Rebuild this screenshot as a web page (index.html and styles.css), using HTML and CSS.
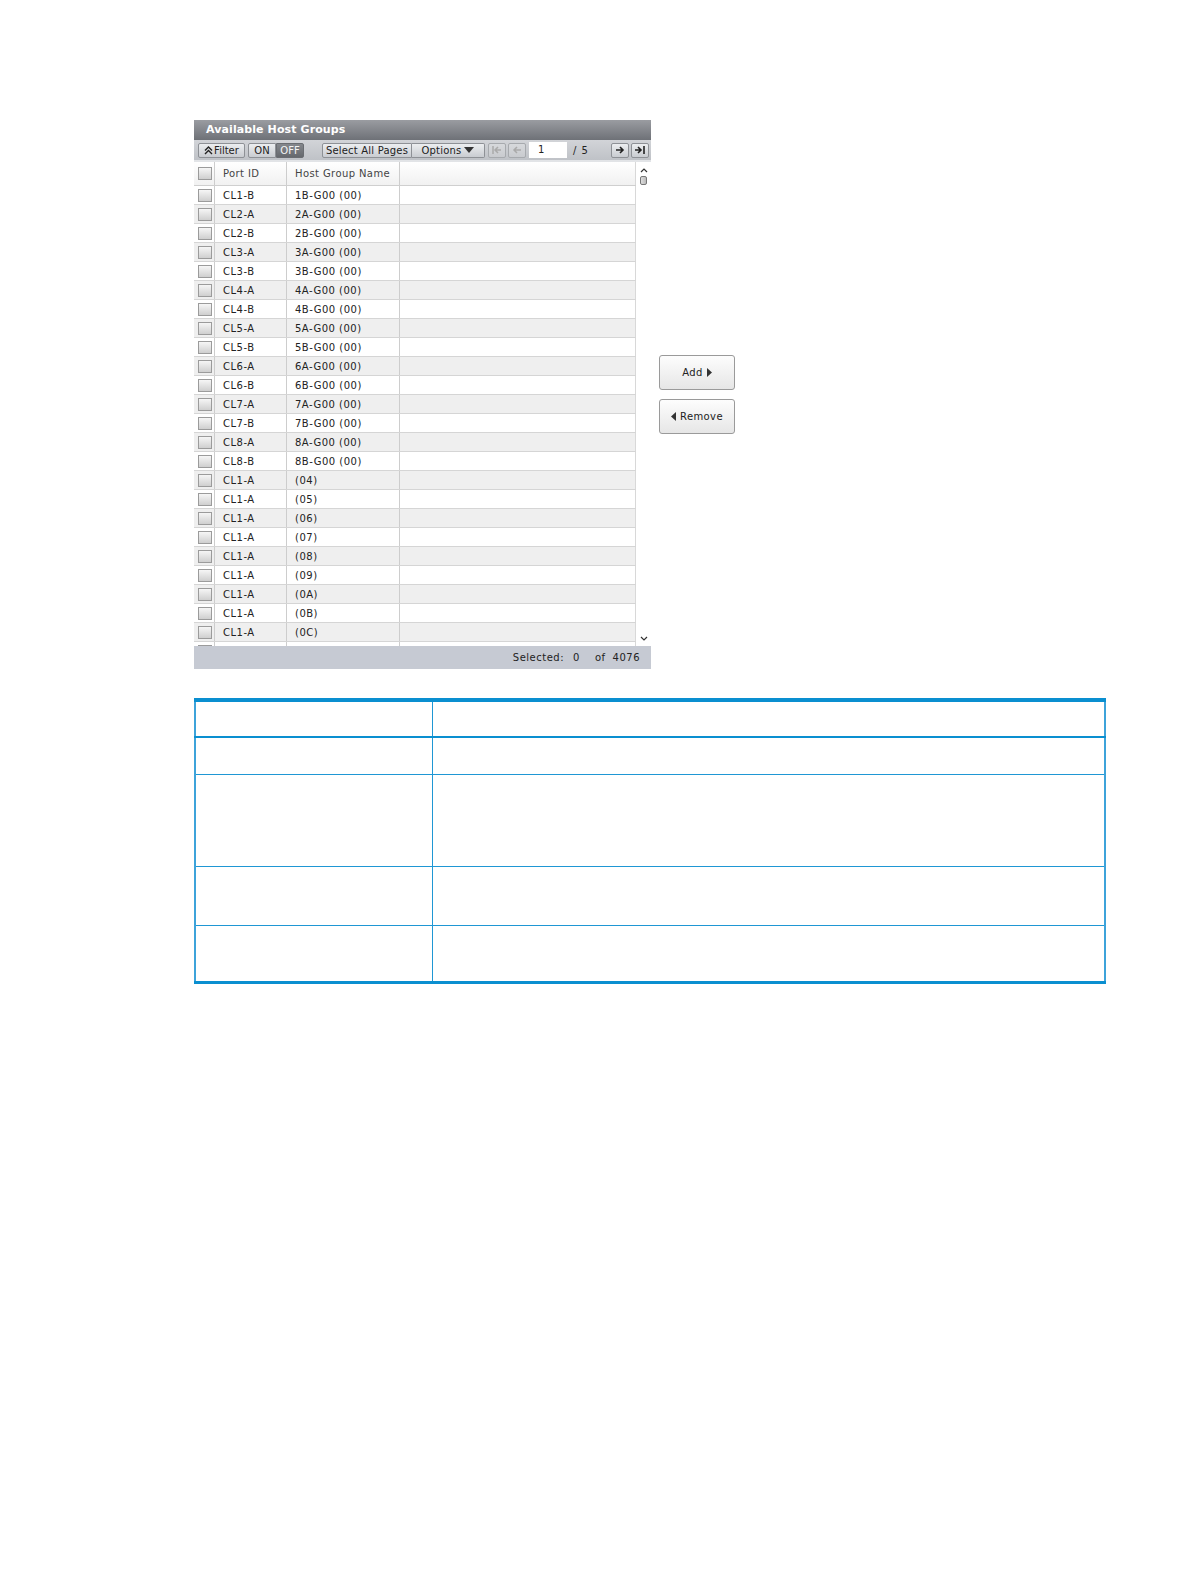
FILE: index.html
```html
<!DOCTYPE html>
<html>
<head>
<meta charset="utf-8">
<link rel="stylesheet" href="styles.css">
</head>
<body>
<div class="page">
  <div class="top">
    <div class="panel">
      <div class="title">Available Host Groups</div>
      <div class="toolbar">
        <span class="tb filter"><svg width="9" height="9" viewBox="0 0 9 9"><path d="M1 4.5 L4.5 1 L8 4.5 M1 8 L4.5 4.5 L8 8" fill="none" stroke="#222" stroke-width="1.4"/></svg>Filter</span>
        <span class="tb on">ON</span><span class="tb off">OFF</span>
        <span class="tb selall">Select All Pages</span><span class="tb options">Options<svg width="10" height="6" viewBox="0 0 10 6"><path d="M0 0 H10 L5 6 Z" fill="#333"/></svg></span>
        <span class="tb nav dis first"><svg width="12" height="10" viewBox="0 0 12 10"><path d="M2 1 V9 M10 5 H4 M7 2 L4 5 L7 8" fill="none" stroke="#aaa" stroke-width="1.5"/></svg></span>
        <span class="tb nav dis prev"><svg width="12" height="10" viewBox="0 0 12 10"><path d="M10 5 H3 M6 2 L3 5 L6 8" fill="none" stroke="#aaa" stroke-width="1.5"/></svg></span>
        <span class="pageinput">1</span>
        <span class="pagecount">/ 5</span>
        <span class="tb nav next"><svg width="12" height="10" viewBox="0 0 12 10"><path d="M2 5 H9 M6 2 L9 5 L6 8" fill="none" stroke="#222" stroke-width="1.6"/></svg></span>
        <span class="tb nav last"><svg width="12" height="10" viewBox="0 0 12 10"><path d="M1 5 H7 M4 2 L7 5 L4 8 M10 1 V9" fill="none" stroke="#222" stroke-width="1.6"/></svg></span>
      </div>
      <div class="gridwrap">
        <div class="grid">
          <div class="row head"><span class="cb"><i class="box"></i></span><span class="c1">Port ID</span><span class="c2">Host Group Name</span><span class="c3"></span></div>
          <div class="row"><span class="cb"><i class="box"></i></span><span class="c1">CL1-B</span><span class="c2">1B-G00 (00)</span><span class="c3"></span></div>
          <div class="row alt"><span class="cb"><i class="box"></i></span><span class="c1">CL2-A</span><span class="c2">2A-G00 (00)</span><span class="c3"></span></div>
          <div class="row"><span class="cb"><i class="box"></i></span><span class="c1">CL2-B</span><span class="c2">2B-G00 (00)</span><span class="c3"></span></div>
          <div class="row alt"><span class="cb"><i class="box"></i></span><span class="c1">CL3-A</span><span class="c2">3A-G00 (00)</span><span class="c3"></span></div>
          <div class="row"><span class="cb"><i class="box"></i></span><span class="c1">CL3-B</span><span class="c2">3B-G00 (00)</span><span class="c3"></span></div>
          <div class="row alt"><span class="cb"><i class="box"></i></span><span class="c1">CL4-A</span><span class="c2">4A-G00 (00)</span><span class="c3"></span></div>
          <div class="row"><span class="cb"><i class="box"></i></span><span class="c1">CL4-B</span><span class="c2">4B-G00 (00)</span><span class="c3"></span></div>
          <div class="row alt"><span class="cb"><i class="box"></i></span><span class="c1">CL5-A</span><span class="c2">5A-G00 (00)</span><span class="c3"></span></div>
          <div class="row"><span class="cb"><i class="box"></i></span><span class="c1">CL5-B</span><span class="c2">5B-G00 (00)</span><span class="c3"></span></div>
          <div class="row alt"><span class="cb"><i class="box"></i></span><span class="c1">CL6-A</span><span class="c2">6A-G00 (00)</span><span class="c3"></span></div>
          <div class="row"><span class="cb"><i class="box"></i></span><span class="c1">CL6-B</span><span class="c2">6B-G00 (00)</span><span class="c3"></span></div>
          <div class="row alt"><span class="cb"><i class="box"></i></span><span class="c1">CL7-A</span><span class="c2">7A-G00 (00)</span><span class="c3"></span></div>
          <div class="row"><span class="cb"><i class="box"></i></span><span class="c1">CL7-B</span><span class="c2">7B-G00 (00)</span><span class="c3"></span></div>
          <div class="row alt"><span class="cb"><i class="box"></i></span><span class="c1">CL8-A</span><span class="c2">8A-G00 (00)</span><span class="c3"></span></div>
          <div class="row"><span class="cb"><i class="box"></i></span><span class="c1">CL8-B</span><span class="c2">8B-G00 (00)</span><span class="c3"></span></div>
          <div class="row alt"><span class="cb"><i class="box"></i></span><span class="c1">CL1-A</span><span class="c2">(04)</span><span class="c3"></span></div>
          <div class="row"><span class="cb"><i class="box"></i></span><span class="c1">CL1-A</span><span class="c2">(05)</span><span class="c3"></span></div>
          <div class="row alt"><span class="cb"><i class="box"></i></span><span class="c1">CL1-A</span><span class="c2">(06)</span><span class="c3"></span></div>
          <div class="row"><span class="cb"><i class="box"></i></span><span class="c1">CL1-A</span><span class="c2">(07)</span><span class="c3"></span></div>
          <div class="row alt"><span class="cb"><i class="box"></i></span><span class="c1">CL1-A</span><span class="c2">(08)</span><span class="c3"></span></div>
          <div class="row"><span class="cb"><i class="box"></i></span><span class="c1">CL1-A</span><span class="c2">(09)</span><span class="c3"></span></div>
          <div class="row alt"><span class="cb"><i class="box"></i></span><span class="c1">CL1-A</span><span class="c2">(0A)</span><span class="c3"></span></div>
          <div class="row"><span class="cb"><i class="box"></i></span><span class="c1">CL1-A</span><span class="c2">(0B)</span><span class="c3"></span></div>
          <div class="row alt"><span class="cb"><i class="box"></i></span><span class="c1">CL1-A</span><span class="c2">(0C)</span><span class="c3"></span></div>
          <div class="row"><span class="cb"><i class="box"></i></span><span class="c1"></span><span class="c2"></span><span class="c3"></span></div>
        </div>
        <div class="scroll">
          <svg class="up" width="8" height="5" viewBox="0 0 8 5"><path d="M1 4 L4 1 L7 4" fill="none" stroke="#333" stroke-width="1.2"/></svg>
          <span class="thumb"></span>
          <span class="spacer"></span>
          <svg class="down" width="8" height="5" viewBox="0 0 8 5"><path d="M1 1 L4 4 L7 1" fill="none" stroke="#333" stroke-width="1.2"/></svg>
        </div>
      </div>
      <div class="footer"><span>Selected:</span><span class="n0">0</span><span class="of">of</span><span class="total">4076</span></div>
    </div>
    <div class="actions">
      <button class="btn add">Add <svg width="5" height="9" viewBox="0 0 5 9"><path d="M0 0 L5 4.5 L0 9 Z" fill="#333"/></svg></button>
      <button class="btn remove"><svg width="5" height="9" viewBox="0 0 5 9"><path d="M5 0 L0 4.5 L5 9 Z" fill="#333"/></svg> Remove</button>
    </div>
  </div>

  <table class="desc">
    <tr class="h"><td class="k"></td><td class="v"></td></tr>
    <tr class="r1"><td class="k"></td><td class="v"></td></tr>
    <tr class="r2"><td class="k"></td><td class="v"></td></tr>
    <tr class="r3"><td class="k"></td><td class="v"></td></tr>
    <tr class="r4"><td class="k"></td><td class="v"></td></tr>
  </table>
</div>
</body>
</html>
```
FILE: styles.css
```css
* { box-sizing: border-box; }
html, body { margin: 0; padding: 0; background: #fff; }
body { font-family: "DejaVu Sans", Verdana, sans-serif; }
.page { padding: 120px 0 0 194px; }

.top { display: flex; align-items: center; }
.panel { width: 457px; height: 549px; display: flex; flex-direction: column; background: #fff; }

.title {
  height: 20px; line-height: 20px; padding-left: 12px;
  font-size: 11px; font-weight: bold; color: #fff; letter-spacing: 0.1px;
  background: linear-gradient(#9a9ca1, #6e7177);
}

.toolbar {
  height: 20px; display: flex; align-items: center;
  background: linear-gradient(#d2d4d8, #bfc2c7);
  padding-left: 4px; font-size: 10px; color: #222;
}
.tb {
  height: 15px; display: inline-flex; align-items: center; justify-content: center;
  border: 1px solid #8e9196; border-radius: 2px;
  background: linear-gradient(#eceef0, #c9ccd1);
  padding: 0 3px; white-space: nowrap;
}
.filter { width: 47px; gap: 1px; }
.on { width: 28px; margin-left: 3px; border-radius: 2px 0 0 2px; }
.off { width: 28px; background: linear-gradient(#85888d, #65686d); color: #f4f4f4; border-color: #6a6d72; border-radius: 0 2px 2px 0; }
.selall { width: 90px; margin-left: 18px; border-radius: 2px 0 0 2px; letter-spacing: 0.2px; }
.options { width: 73px; gap: 3px; border-left: none; border-radius: 0 2px 2px 0; letter-spacing: 0.2px; }
.nav { width: 18px; padding: 0; }
.first { margin-left: 3px; }
.prev { margin-left: 2px; }
.dis { background: linear-gradient(#d7d9dc, #c9cbcf); border-color: #a7aaae; }
.pageinput {
  width: 38px; height: 16px; margin-left: 3px; background: #fff; line-height: 16px;
  padding-left: 9px; font-size: 10px;
}
.pagecount { margin-left: 6px; width: 38px; letter-spacing: 1px; }
.next { margin-left: 0; }
.last { margin-left: 2px; }

.gridwrap { flex: 1; display: flex; min-height: 0; border-top: 2px solid #e2e4e7; }
.grid { width: 442px; overflow: hidden; }
.row {
  display: grid; grid-template-columns: 21px 72px 113px 1fr;
  height: 19px; border-bottom: 1px solid #d5d5d5; background: #fff;
  font-size: 10px; color: #222; letter-spacing: 0.5px;
}
.row.alt { background: #efefef; }
.row.head { height: 24px; background: linear-gradient(#ffffff, #f1f1f1); color: #444; border-bottom: 1px solid #cfcfcf; letter-spacing: 0.4px; }
.row > span { display: flex; align-items: center; border-right: 1px solid #cdcdcd; }
.row > span.c3 { border-right: 1px solid #d8d8d8; }
.cb { justify-content: center; padding-left: 1px; }
.box {
  display: block; width: 14px; height: 13px;
  border: 1px solid #9b9b9b; background: linear-gradient(#f6f6f6, #cfcfcf);
}
.c1 { padding-left: 8px; }
.c2 { padding-left: 8px; }

.scroll { width: 15px; display: flex; flex-direction: column; align-items: center; background: #fff; }
.scroll .up { margin-top: 6px; }
.scroll .thumb { width: 7px; height: 9px; margin-top: 3px; border: 1px solid #777; border-radius: 2px; background: linear-gradient(90deg, #ddd, #bbb); }
.scroll .spacer { flex: 1; }
.scroll .down { margin-bottom: 5px; }

.footer {
  height: 23px; display: flex; align-items: center; justify-content: flex-end;
  padding-right: 11px; background: #c6cad3; font-size: 10px; color: #222; letter-spacing: 0.5px;
}
.footer .n0 { margin-left: 9px; }
.footer .of { margin-left: 15px; }
.footer .total { margin-left: 7px; }

.actions { display: flex; flex-direction: column; gap: 9px; margin-left: 8px; }
.btn {
  width: 76px; height: 35px; border: 1px solid #9a9a9a; border-radius: 3px;
  background: linear-gradient(#fdfdfd, #e6e6e6);
  font-family: "DejaVu Sans", Verdana, sans-serif; font-size: 10px; color: #222; letter-spacing: 0.4px;
  display: flex; align-items: center; justify-content: center; gap: 4px; padding: 0;
}

.desc {
  margin-top: 29px; width: 912px; border-collapse: collapse;
  border-top: 4px solid #0a8fd0; border-bottom: 3px solid #0a8fd0;
  border-left: 2px solid #3da3da; border-right: 2px solid #3da3da;
}
.desc td { border: 1px solid #1f97d4; padding: 0; }
.desc td.k { width: 237px; }
.desc tr.h td { height: 37px; border-bottom: 2px solid #0a8fd0; }
.desc tr.r1 td { height: 37px; }
.desc tr.r2 td { height: 92px; }
.desc tr.r3 td { height: 59px; }
.desc tr.r4 td { height: 57px; }
```
